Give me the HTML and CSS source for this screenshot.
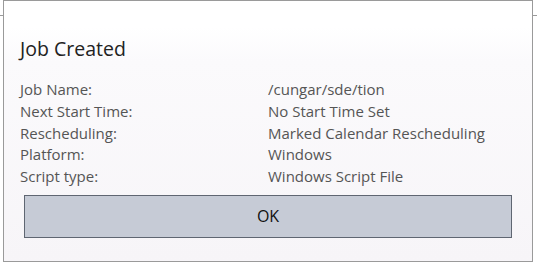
FILE: index.html
```html
<!DOCTYPE html>
<html lang="en">
<head>
    <meta charset="UTF-8">
    <title>Job Created</title>
    <link rel="stylesheet" href="styles.css">
</head>
<body>
    <div id="dialog">
        <h1>Job Created</h1>
        <div class="details">
            <span class="label">Job Name:</span><span class="value">/cungar/sde/tion</span>
            <span class="label">Next Start Time:</span><span class="value">No Start Time Set</span>
            <span class="label">Rescheduling:</span><span class="value">Marked Calendar Rescheduling</span>
            <span class="label">Platform:</span><span class="value">Windows</span>
            <span class="label">Script type:</span><span class="value">Windows Script File</span>
        </div>
        <button class="ok">OK</button>
    </div>
</body>
</html>
```

FILE: styles.css
```css
body {
    margin: 0;
    background-color: white;
    font-family: "Open Sans", sans-serif;
}
#dialog {
    position: relative;
    width: 528px;
    height: 260px;
    margin-left: 3px;
    border: 1px solid #9a9a9a;
    background: linear-gradient(#ffffff 0, #ffffff 26px, #fbfafc 60px, #f7f5f8 100%);
    box-sizing: content-box;
}
#dialog::before, #dialog::after {
    content: "";
    position: absolute;
    top: 14px;
    width: 4px;
    height: 1px;
    background-color: #9a9a9a;
}
#dialog::before {
    left: -4px;
}
#dialog::after {
    right: -5px;
}
h1 {
    margin: 0;
    padding: 35px 0 0 16px;
    font-size: 19.5px;
    font-weight: normal;
    color: #222;
    line-height: 26px;
}
.details {
    display: grid;
    grid-template-columns: 248px 1fr;
    margin: 17px 0 0 16px;
    font-size: 15px;
    line-height: 21.8px;
    color: #555;
}
.ok {
    display: block;
    width: 488px;
    height: 43px;
    margin: 7px 0 0 20px;
    border: 1px solid #5f6672;
    background-color: #c6cbd6;
    font-family: "Open Sans", sans-serif;
    font-size: 16px;
    color: #111;
    padding: 0;
}
```
